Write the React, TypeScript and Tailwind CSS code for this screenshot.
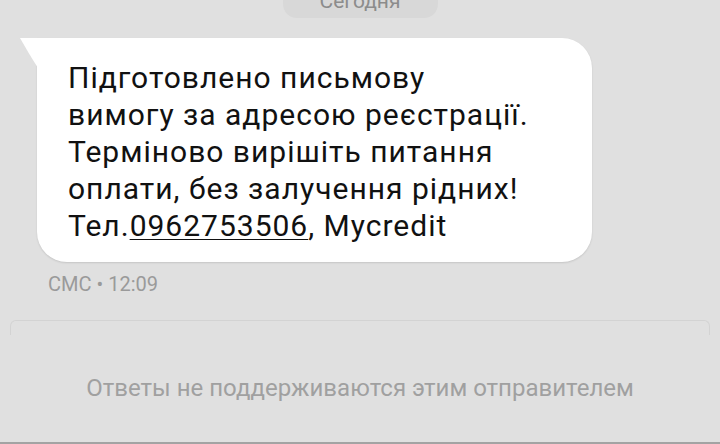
// SMS thread view — a single incoming message from a sender that can't
// receive replies. Android Messages look: grey canvas, white bubble with
// a tail at the top-left, meta line under it, and a disabled composer.

const ROBOTO = "font-['Roboto','Liberation_Sans',sans-serif]";

function DatePill({ label }: { label: string }) {
  return (
    <div className="flex justify-center">
      <div className="mt-[-23px] flex h-[41px] w-[155px] items-center justify-center rounded-[14px] bg-[#d8d8d8] pt-[7px] text-[21px] leading-none text-[#8c8c8c]">
        {label}
      </div>
    </div>
  );
}

function Bubble({ children }: { children: React.ReactNode }) {
  return (
    <div className="relative ml-[37px] w-[555px] rounded-[30px] rounded-tl-none bg-white pt-[21px] pb-[18px] pl-[31px] shadow-[0_1px_2px_rgba(0,0,0,0.12)]">
      {/* tail */}
      <svg
        viewBox="0 0 18 30"
        className="absolute top-0 left-[-17px] h-[30px] w-[18px]"
      >
        <path d="M0 0 H18 V30 Q9 16 0 0 Z" fill="#ffffff" />
      </svg>
      {children}
    </div>
  );
}

export default function App() {
  return (
    <div
      className={`flex h-[444px] w-[720px] flex-col overflow-hidden bg-[#e0e0e0] ${ROBOTO}`}
    >
      <DatePill label="Сегодня" />

      <div className="mt-[20px]">
        <Bubble>
          <p className="text-[30px] leading-[37px] tracking-[1px] text-[#111111]">
            Підготовлено письмову
            <br />
            вимогу за адресою реєстрації.
            <br />
            Терміново вирішіть питання
            <br />
            оплати, без залучення рідних!
            <br />
            Тел.<span className="underline decoration-1 underline-offset-[3px]">0962753506</span>, Mycredit
          </p>
        </Bubble>
      </div>

      <div className="mt-[10px] pl-[48px] text-[20px] leading-[24px] text-[#9a9a9a]">
        СМС • 12:09
      </div>

      {/* composer, disabled */}
      <div className="mx-[10px] mt-[24px] h-[15px] rounded-t-[6px] border-x border-t border-[#d3d3d3]" />
      <div className="mt-[39px] text-center text-[24px] leading-[28px] text-[#a0a0a0]">
        Ответы не поддерживаются этим отправителем
      </div>

      <div className="mt-auto h-[2px] bg-[#a3a3a3]" />
    </div>
  );
}
